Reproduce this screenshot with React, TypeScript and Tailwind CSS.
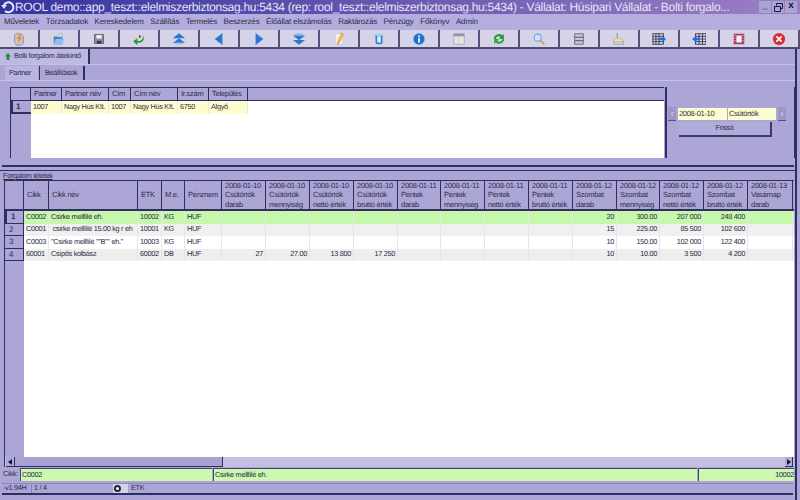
import React from "react";

const menu = ["Műveletek", "Törzsadatok", "Kereskedelem", "Szállítás", "Termelés", "Beszerzés", "Élőállat elszámolás", "Raktározás", "Pénzügy", "Főkönyv", "Admin"];

const icons: React.ReactNode[] = [
  <><path d="M4 2h6l3 3v8l-3 2H5l-2-3V4z" fill="#c9c6d6" stroke="#8d8aa0" /><path d="M9 2 5 8h3l-2 6 6-8H9l2-4z" fill="#f0902a" /></>,
  <><path d="M2 5h4l1 1h5v8H2z" fill="#3f7fd0" /><path d="M4 8h10l-2 6H2z" fill="#8fc0ee" /><path d="M8 2h4v3H8z" fill="#e8e8f0" stroke="#8888a0" strokeWidth=".5" /></>,
  <><rect x="3" y="3" width="10" height="10" fill="#8e8ca8" stroke="#55556f" /><rect x="5" y="3.500" width="6" height="4" fill="#f3f3f8" /><rect x="5.500" y="10" width="5" height="3" fill="#33334f" /></>,
  <><path d="M13 4c0 5-3 7-7 6V7L1.500 10.500 6 15v-3c5 1 9-2 7-8z" fill="#1f9a2f" /><path d="M8 3l3 2-3 2z" fill="#c03020" /></>,
  <><path d="M8 1.500 15 7H1z" fill="#2f74d0" /><path d="M8 7l7 5.500H1z" fill="#2f74d0" /><rect x="4" y="12" width="8" height="2" fill="#8fc0ee" /></>,
  <path d="M12 1v14L3 8z" fill="#2f74d0" stroke="#8fc0ee" strokeWidth=".5" />,
  <path d="M4 1v14l9-7z" fill="#2f74d0" stroke="#8fc0ee" strokeWidth=".5" />,
  <><rect x="3" y="1.500" width="10" height="2" fill="#8fc0ee" /><path d="M8 14.500 15 9H1z" fill="#2f74d0" /><path d="M8 9.500 15 4H1z" fill="#2f74d0" /></>,
  <><rect x="4" y="2" width="8" height="12" fill="#f2efe8" stroke="#c8c4d8" strokeWidth=".5" /><path d="M11 1l2 1.500-5 10.500-2 1.500.2-2.500z" fill="#f0c030" stroke="#d08030" strokeWidth=".5" /></>,
  <><rect x="4" y="2" width="8" height="12" rx="2" fill="#2f80d8" /><rect x="6" y="5" width="4" height="7" fill="#e8f2fc" /><ellipse cx="8" cy="3" rx="4" ry="1.500" fill="#a8d0f4" /></>,
  <><circle cx="8" cy="8" r="6.500" fill="#2070d0" stroke="#8fc0ee" strokeWidth=".7" /><rect x="7" y="7" width="2" height="5" fill="#fff" /><rect x="7" y="4" width="2" height="2" fill="#fff" /></>,
  <><rect x="2" y="2" width="12" height="12" fill="#e9e4dc" stroke="#a8a6c0" /><rect x="2" y="2" width="12" height="3" fill="#8f93b8" /><path d="M8 5v9" stroke="#c8c6d0" /></>,
  <><path d="M2 8a6 6 0 0 1 10-4l1.500-2v6H8l2-2a3.500 3.500 0 0 0-6 2z" fill="#1f9a2f" /><path d="M14 8a6 6 0 0 1-10 4l-1.500 2V8H8l-2 2a3.500 3.500 0 0 0 6-2z" fill="#2fa83f" /></>,
  <><circle cx="6.500" cy="6.500" r="4" fill="#cfe6f8" stroke="#6ea4d8" strokeWidth="1.300" /><path d="M10 10l4 4" stroke="#c89a40" strokeWidth="2" /></>,
  <><path d="M3 2h10v12H3z" fill="#c8c6d4" stroke="#66667e" /><path d="M3 6h10M3 10h10" stroke="#55556c" strokeWidth="1.200" /></>,
  <><path d="M2 11h11v3H2z" fill="#d8d6e0" stroke="#8a88a0" strokeWidth=".7" /><path d="M3 8h8l2 3H2z" fill="#f4e6a8" stroke="#a89858" strokeWidth=".5" /><path d="M6 1v6" stroke="#9a9ab0" strokeWidth="1.500" /></>,
  <><rect x="1" y="2" width="12" height="12" fill="#d8d6e8" stroke="#33334f" /><path d="M1 5h12M1 8h12M1 11h12M4.500 2v12M8 2v12" stroke="#33334f" /><path d="M8 6.500h4V4l4 4-4 4V9.500H8z" fill="#2070d8" /></>,
  <><rect x="4" y="2" width="12" height="12" fill="#d8d6e8" stroke="#33334f" /><path d="M4 5h12M4 8h12M4 11h12M8 2v12M12 2v12" stroke="#33334f" /><path d="M9 6.500H5V4L0 8l5 4V9.500h4z" fill="#2070d8" /></>,
  <><rect x="2" y="2" width="12" height="12" fill="#b03a5a" /><rect x="5" y="4" width="6" height="8" fill="#f6f4f8" /><path d="M3 4h1M3 7h1M3 10h1M12 4h1M12 7h1M12 10h1" stroke="#fff" /></>,
  <><circle cx="8" cy="8" r="7" fill="#dc2a30" /><path d="M5 5l6 6M11 5l-6 6" stroke="#fff" strokeWidth="2" /></>,
];

const dayCols = [
  ["2008-01-10", "Csütörtök", "darab"], ["2008-01-10", "Csütörtök", "mennyiség"], ["2008-01-10", "Csütörtök", "nettó érték"], ["2008-01-10", "Csütörtök", "bruttó érték"],
  ["2008-01-11", "Péntek", "darab"], ["2008-01-11", "Péntek", "mennyiség"], ["2008-01-11", "Péntek", "nettó érték"], ["2008-01-11", "Péntek", "bruttó érték"],
  ["2008-01-12", "Szombat", "darab"], ["2008-01-12", "Szombat", "mennyiség"], ["2008-01-12", "Szombat", "nettó érték"], ["2008-01-12", "Szombat", "bruttó érték"],
  ["2008-01-13", "Vasárnap", "darab"],
];

const rows = [
  { bg: "bg-[#c6f8ac]", cikk: "C0002", nev: "Csirke mellfilé eh.", etk: "10002", me: "KG", v: { 8: "20", 9: "300.00", 10: "207 000", 11: "248 400" } as Record<number, string> },
  { bg: "bg-[#f0f0f0]", cikk: "C0001", nev: " csirke mellfilé 15.00 kg r eh", etk: "10001", me: "KG", v: { 8: "15", 9: "225.00", 10: "85 500", 11: "102 600" } as Record<number, string> },
  { bg: "bg-white", cikk: "C0003", nev: "\"Csirke mellfilé \"\"B\"\" eh.\"", etk: "10003", me: "KG", v: { 8: "10", 9: "150.00", 10: "102 000", 11: "122 400" } as Record<number, string> },
  { bg: "bg-[#eeeeee]", cikk: "60001", nev: "Csípős kolbász", etk: "60002", me: "DB", v: { 0: "27", 1: "27.00", 2: "13 800", 3: "17 250", 8: "10", 9: "10.00", 10: "3 500", 11: "4 200" } as Record<number, string> },
];

const dayW = [44, 44, 44, 44, 43, 44, 44, 44, 44, 43, 44, 44, 45];

function Head({ w, children }: { w: number; children: React.ReactNode }) {
  return (
    <div style={{ width: w }} className="shrink-0 flex items-center pl-[3px] text-[7.500px] tracking-[-0.25px] border-r border-[#2f2d63] leading-[9.500px] overflow-hidden whitespace-nowrap">
      <div>{children}</div>
    </div>
  );
}

function Cell({ w, right, children }: { w: number; right?: boolean; children?: React.ReactNode }) {
  return (
    <div style={{ width: w }} className={`shrink-0 h-full border-r border-[#e4e4ea] whitespace-pre overflow-hidden flex items-center ${right ? "justify-end pr-[2px]" : "pl-[2px]"}`}>
      {children}
    </div>
  );
}

export default function App() {
  return (
    <div className="w-[800px] h-[500px] overflow-hidden flex flex-col bg-[#aca6d6] text-[7.300px] tracking-[-0.3px] text-[#2c2c48] [text-rendering:geometricPrecision] font-['Liberation_Sans',sans-serif]">
      {/* title bar */}
      <div className="h-[14px] shrink-0 flex items-center bg-gradient-to-r from-[#3434a0] via-[#6a58b0] to-[#9c80c4] text-[#e6e4f6] text-[12px] whitespace-nowrap overflow-hidden">
        <svg width="14" height="14" viewBox="0 0 14 14" className="shrink-0 ml-[1px]">
          <path d="M3 5a5 5 0 1 1 1 6" fill="none" stroke="#e8e8f4" strokeWidth="2" />
          <path d="M0 5h6L3 9z" fill="#e8e8f4" />
        </svg>
        <div className="min-w-0 flex-1 overflow-hidden pr-[6px]">ROOL demo::app_teszt::elelmiszerbiztonsag.hu:5434 (rep: rool_teszt::elelmiszerbiztonsag.hu:5434) - Vállalat: Húsipari Vállalat - Bolti forgalo...</div>
        <div className="flex gap-[1px] mr-[3px] shrink-0 text-[#15153c] text-[10px] font-bold leading-[9px] text-center">
          <div className="w-[12px] h-[12px] bg-[#a8a4d4]">_</div>
          <div className="w-[12px] h-[12px] bg-[#a8a4d4] flex items-center justify-center">
            <svg width="9" height="9" viewBox="0 0 9 9" fill="none" stroke="#15153c"><path d="M2.500 2.500V.5h6v5h-2" /><path d="M.5 3.500h6v5h-6z" /></svg>
          </div>
          <div className="w-[12px] h-[12px] bg-[#a8a4d4]">x</div>
        </div>
      </div>

      {/* menu */}
      <div className="h-[16px] shrink-0 flex items-center gap-[6.500px] pl-[4px] text-[8px] tracking-[-0.15px] bg-[#b3aedd]">
        {menu.map((m) => (
          <span key={m} className="whitespace-nowrap">{m}</span>
        ))}
      </div>

      {/* toolbar */}
      <div className="h-[19px] shrink-0 flex bg-[#d6d3e6] border-b-2 border-[#4e4c74]">
        {icons.map((ic, i) => (
          <div key={i} className="w-[40px] shrink-0 flex items-center justify-center border-r-2 border-[#55537c]">
            <svg width="14" height="14" viewBox="0 0 16 16">{ic}</svg>
          </div>
        ))}
      </div>

      {/* body */}
      <div className="flex-1 min-h-0 flex flex-col mr-[3px] border-r-2 border-[#2f2d63]">
        {/* document tab */}
        <div className="h-[16px] shrink-0 flex border-b border-[#c4c0e6]">
          <div className="w-[90px] flex items-center gap-[3px] pl-[5px] bg-[#bdb9e2] border-r-2 border-[#2f2d63] whitespace-nowrap">
            <svg width="6" height="7" viewBox="0 0 7 8" className="shrink-0"><path d="M3.500 0 7 4H5v4H2V4H0z" fill="#1f8a2f" /></svg>
            <span>Bolti forgalom áttekintő</span>
          </div>
        </div>

        {/* sub tabs */}
        <div className="h-[16px] shrink-0 flex pl-[5px] pt-[1px] border-b border-[#c4c0e6]">
          <div className="w-[33px] pl-[4px] flex items-center bg-[#b9b4e0]">Partner</div>
          <div className="w-[46px] pl-[5px] ml-[1px] flex items-center border-r-2 border-[#2f2d63] border-l border-l-[#2f2d63]">Beállítások</div>
        </div>

        {/* top panel */}
        <div className="h-[86px] shrink-0 flex ml-[2px] mr-[1px] border-b-2 border-[#2f2d63] pt-[6px] pb-[7px]">
          <div className="w-[654px] ml-[8px] shrink-0 flex flex-col border-t border-l border-[#2f2d63]">
            <div className="h-[13px] shrink-0 flex border-b border-[#2f2d63]">
              <Head w={20}>{""}</Head>
              <Head w={31}>Partner</Head>
              <Head w={47}>Partner név</Head>
              <Head w={22}>Cím</Head>
              <Head w={47}>Cím név</Head>
              <Head w={31}>Ir.szám</Head>
              <Head w={39}>Település</Head>
            </div>
            <div className="flex-1 flex min-h-0">
              <div className="w-[20px] shrink-0 flex flex-col">
                <div className="h-[13px] border-l-2 border-b-2 border-[#2f2d63] pl-[3px] font-bold text-[8px] leading-[11px]">1</div>
              </div>
              <div className="flex-1 bg-white">
                <div className="w-[217px] h-[13px] bg-[#fdfdcf] flex items-center">
                  <Cell w={31}>1007</Cell>
                  <Cell w={47}>Nagy Hús Kft.</Cell>
                  <Cell w={22}>1007</Cell>
                  <Cell w={47}>Nagy Hús Kft.</Cell>
                  <Cell w={31}>6750</Cell>
                  <Cell w={39}>Algyő</Cell>
                </div>
              </div>
            </div>
          </div>
          <div className="flex-1 border-l-2 border-[#2f2d63] ml-[1px] pl-[1px] pr-[8px] pt-[20px] border-r border-r-[#2f2d63] flex flex-col">
            <div className="flex items-center gap-[1px]">
              <div className="w-[8px] h-[14px] bg-[#9c97c8] border-b border-[#55537c] text-center text-[8px] leading-[13px] text-[#e8e6f6]">‹</div>
              <div className="w-[49px] h-[12px] ml-[1px] bg-[#fdfdcf] pl-[1px] leading-[12px] text-[7.500px]">2008-01-10</div>
              <div className="w-[48px] h-[12px] bg-[#fdfdcf] pl-[1px] leading-[12px] text-[7.500px]">Csütörtök</div>
              <div className="w-[8px] h-[14px] ml-[1px] bg-[#9c97c8] border-b border-[#55537c] text-center text-[8px] leading-[13px] text-[#e8e6f6]">›</div>
            </div>
            <div className="w-[93px] h-[15px] ml-[11px] mt-[1px] border-r-2 border-b-2 border-[#3c3a6c] flex items-center justify-center bg-[#b1abda]">Frissít</div>
          </div>
        </div>

        {/* section label */}
        <div className="h-[10px] shrink-0 mt-[3px] pl-[3px] flex items-end border-t border-[#2f2d63]">
          <span className="underline leading-[8px]">Forgalom tételek</span>
        </div>

        {/* items grid */}
        <div className="flex-1 min-h-0 flex flex-col ml-[4px] mr-[1px] border-t border-l border-[#2f2d63]">
          <div className="h-[30px] shrink-0 flex border-b-2 border-[#2f2d63] overflow-hidden">
            <Head w={19}>{""}</Head>
            <Head w={25}>Cikk</Head>
            <Head w={89}>Cikk név</Head>
            <Head w={24}>ETK</Head>
            <Head w={23}>M.e.</Head>
            <Head w={37}>Pénznem</Head>
            {dayCols.map((c, i) => (
              <Head key={i} w={dayW[i]}>
                {c[0]}<br />{c[1]}<br />{c[2]}
              </Head>
            ))}
          </div>
          <div className="flex-1 min-h-0 flex">
            <div className="w-[19px] shrink-0 flex flex-col">
              {rows.map((r, i) => (
                <div key={r.cikk} className={`h-[12.500px] shrink-0 border-b border-r border-[#2f2d63] pl-[4px] text-[8px] leading-[12px] ${i === 0 ? "font-bold border-l-2" : ""}`}>{i + 1}</div>
              ))}
            </div>
            <div className="flex-1 bg-white overflow-hidden">
              {rows.map((r) => (
                <div key={r.cikk} className={`h-[12.500px] w-[780px] flex ${r.bg}`}>
                  <Cell w={25}>{r.cikk}</Cell>
                  <Cell w={89}>{r.nev}</Cell>
                  <Cell w={24}>{r.etk}</Cell>
                  <Cell w={23}>{r.me}</Cell>
                  <Cell w={37}>HUF</Cell>
                  {dayCols.map((_, i) => (
                    <Cell key={i} w={dayW[i]} right>{r.v[i]}</Cell>
                  ))}
                </div>
              ))}
            </div>
          </div>

          {/* horizontal scrollbar */}
          <div className="h-[10px] shrink-0 flex items-stretch bg-[#c2bee4]">
            <div className="w-[9px] ml-[1px] bg-[#b1abda] border-r border-b border-[#2f2d63] flex items-center justify-center">
              <div className="border-y-[3px] border-y-transparent border-r-[4px] border-r-[#15153c]" />
            </div>
            <div className="w-[208px] bg-[#a9a3d4] border-r border-b border-[#2f2d63]" />
            <div className="flex-1" />
            <div className="w-[8px] mr-[1px] bg-[#b1abda] border-r border-b border-[#2f2d63] flex items-center justify-center">
              <div className="border-y-[3px] border-y-transparent border-l-[4px] border-l-[#15153c]" />
            </div>
          </div>
        </div>

        {/* current row */}
        <div className="h-[13px] shrink-0 flex items-stretch pl-[3px] mr-[1px] mt-[1px]">
          <div className="w-[17px] flex items-center">Cikk:</div>
          <div className="w-[192px] bg-[#ccf8b0] border-t border-l border-[#45436c] pl-[1px] flex items-center">C0002</div>
          <div className="w-[484px] ml-[1px] bg-[#ccf8b0] border-t border-l border-[#45436c] pl-[1px] flex items-center">Csirke mellfilé eh.</div>
          <div className="flex-1 ml-[1px] bg-[#ccf8b0] border-t border-l border-[#45436c] flex items-center justify-end">10002</div>
        </div>

        {/* status row */}
        <div className="h-[12px] shrink-0 flex items-stretch mt-[2px] ml-[2px] mr-[2px] border-t border-[#8a85bc] border-b-2 border-b-[#2f2d63]">
          <div className="w-[29px] flex items-center pl-[1px]">-v1.94H</div>
          <div className="w-[79px] pl-[2px] flex items-center border-l border-[#8a85bc]">1 / 4</div>
          <div className="w-[15px] ml-[3px] bg-[#d6d3e6] flex items-center pl-[1px]">
            <div className="w-[7px] h-[7px] rounded-full bg-white border-2 border-[#222238]" />
          </div>
          <div className="pl-[3px] flex items-center">ETK</div>
        </div>
        <div className="h-[5px] shrink-0" />
      </div>
    </div>
  );
}
